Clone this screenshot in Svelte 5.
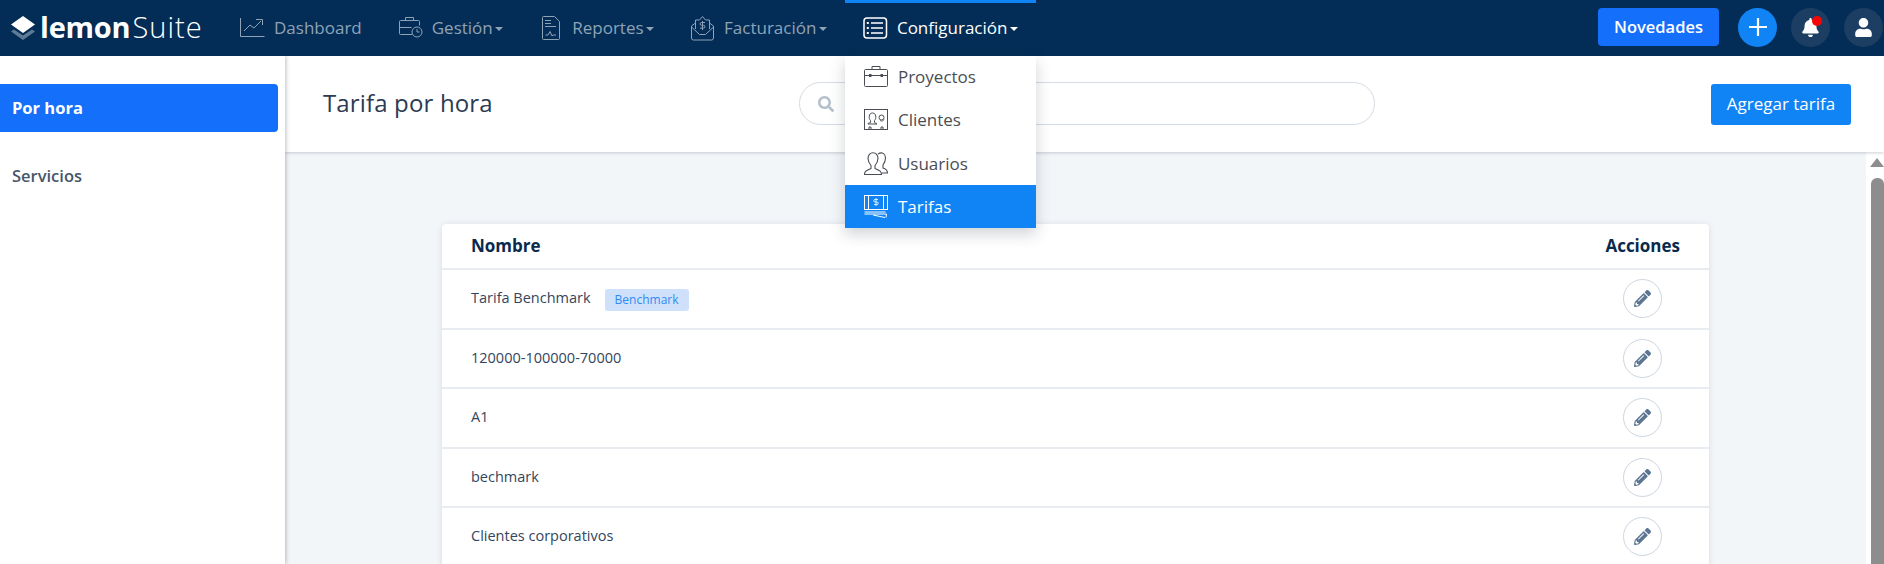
<script lang="ts">
	const navItems = [
		{ label: 'Dashboard', icon: 'chart', caret: false },
		{ label: 'Gestión', icon: 'case', caret: true },
		{ label: 'Reportes', icon: 'report', caret: true },
		{ label: 'Facturación', icon: 'mail', caret: true }
	];

	const rows = [
		{ name: 'Tarifa Benchmark', badge: 'Benchmark' },
		{ name: '120000-100000-70000' },
		{ name: 'A1' },
		{ name: 'bechmark' },
		{ name: 'Clientes corporativos' }
	];
</script>

{#snippet lineIcon(name: string)}
	{#if name === 'report'}
		<svg class="line-icon narrow" viewBox="0 0 22 26" fill="none" stroke="currentColor">
			<path d="M3.500 1.500h11l5 5v17a1 1 0 0 1-1 1h-15a1 1 0 0 1-1-1v-21a1 1 0 0 1 1-1z" />
			<path d="M5 5.500h6M5 8.500h6M5 11.500h11" />
			<path d="M5.500 20h2.500l2-3.500 2 4.500 1-1h3" />
		</svg>
	{:else}
		<svg class="line-icon" viewBox="0 0 25 26" fill="none" stroke="currentColor">
			{#if name === 'chart'}
				<path d="M0.500 3v18.500h24" />
				<path d="M4 16l6-6 4 3 7-7" />
				<path d="M16 4.500h6.500V10" />
			{:else if name === 'case'}
				<path d="M14 19.500H2.500a1 1 0 0 1-1-1v-12a1 1 0 0 1 1-1h18a1 1 0 0 1 1 1v4" />
				<path d="M7.500 5.500v-3h8v3M1.500 12.500h12" />
				<circle cx="19" cy="17" r="5" />
				<path d="M19 14v3h2.500" />
			{:else if name === 'mail'}
				<path d="M1.500 11v12a2 2 0 0 0 2 2h18a2 2 0 0 0 2-2V11" />
				<path d="M1.500 11l4-3M23.500 11l-4-3" />
				<path d="M5.500 14V5h4l3-3.500 3 3.500h4v9" />
				<path d="M1.500 12l8 7.500h6l8-7.500" />
				<path d="M15 7.500h-3.500a1.300 1.300 0 0 0 0 2.800h2a1.300 1.300 0 0 1 0 2.800H10M12.500 6v9" />
			{/if}
		</svg>
	{/if}
{/snippet}

<div class="page">
	<nav class="topbar">
		<div class="logo">
			<svg class="logo-mark" viewBox="0 0 24 24">
				<path d="M0 15.500l3-2 9 6 9-6 3 2-12 8.500z" fill="#5f7a96" />
				<path d="M12 0l12 8.500-12 8.500L0 8.500z" fill="#fff" />
			</svg>
			<span class="logo-bold">lemon</span><span class="logo-light">Suite</span>
		</div>

		{#each navItems as item}
			<div class="nav-item">
				{@render lineIcon(item.icon)}
				<span>{item.label}</span>
				{#if item.caret}<i class="caret"></i>{/if}
			</div>
		{/each}

		<div class="nav-item active">
			<svg class="line-icon" viewBox="0 0 25 26" fill="none" stroke="currentColor" stroke-width="1.500">
				<rect x="1" y="3" width="22.500" height="20" rx="3" />
				<path d="M8 8h12M8 13h12M8 18h12" />
				<path d="M3.800 8h2M3.800 13h2M3.800 18h2" stroke-width="2.200" />
			</svg>
			<span>Configuración</span>
			<i class="caret"></i>

			<div class="dropdown">
				<div class="drop-item lift">
					<svg class="drop-icon" viewBox="0 0 24 23" fill="none" stroke="currentColor">
						<rect x="0.500" y="4.500" width="23" height="17" rx="1" />
						<path d="M8 4.500v-3h8v3M0.500 10.500h23" />
						<path d="M5 9h2.500v3H5zM16.500 9H19v3h-2.500z" fill="currentColor" stroke="none" />
					</svg>
					<span>Proyectos</span>
				</div>
				<div class="drop-item lift">
					<svg class="drop-icon" viewBox="0 0 24 23" fill="none" stroke="currentColor">
						<rect x="0.500" y="1.500" width="23" height="20" />
						<path d="M6.500 12.500c-2-2-2-7.500 2-7.500s4 5.500 2 7.500v2l2.500 1.500H4v-0.500l2.500-1z" />
						<circle cx="17.500" cy="9.500" r="2.500" />
						<path d="M16 12.500c1.500 1 3.500 0.500 4-1" stroke-width="0.800" />
						<path d="M5 21.500v-2.500h2v2.500M17 21.500v-2.500h2v2.500" />
					</svg>
					<span>Clientes</span>
				</div>
				<div class="drop-item">
					<svg class="drop-icon" viewBox="0 0 24 23" fill="none" stroke="currentColor" stroke-width="1.100">
						<path d="M0.500 22.500c0-3 1.500-4 6.500-6v-3C5 11 4 9 4 6.500 4 3 6 0.800 9 0.800s5 2.200 5 5.700c0 2.500-1 4.500-3 7v3c5 2 6.500 3 6.500 6z" />
						<path d="M14 2c4-2.500 7.500-0.500 7.500 4 0 3-1 5-2.500 7v3c3 1 4.500 2.500 4.500 5h-6" />
					</svg>
					<span>Usuarios</span>
				</div>
				<div class="drop-item selected">
					<svg class="drop-icon" viewBox="0 0 24 23" fill="none" stroke="currentColor">
						<rect x="0.500" y="0.500" width="23" height="14" />
						<path d="M4.500 0.500v14M19.500 0.500v14" />
						<path d="M14 4.500h-3a1 1 0 0 0 0 2.500h2a1 1 0 0 1 0 2.500h-3M12 3v8" stroke-width="0.800" />
						<path d="M0.500 17h21M0.500 19h22l-0.500 3.500M9 20l12 2.500" />
					</svg>
					<span>Tarifas</span>
				</div>
			</div>
		</div>

		<div class="nav-right">
			<button class="btn-news">Novedades</button>
			<div class="round plus">
				<svg viewBox="0 0 20 20" width="20" height="20"><path d="M10 1v18M1 10h18" stroke="#fff" stroke-width="2.200" /></svg>
			</div>
			<div class="round dark bell">
				<svg viewBox="0 0 448 512" width="17" height="19">
					<path fill="#fff" d="M224 512c35.320 0 63.970-28.650 63.970-64H160.030c0 35.350 28.650 64 63.970 64zm215.390-149.710c-19.320-20.760-55.470-51.990-55.470-154.290 0-77.700-54.480-139.900-127.940-155.160V32c0-17.670-14.320-32-31.980-32s-31.980 14.330-31.980 32v20.840C118.560 68.100 64.080 130.300 64.080 208c0 102.300-36.150 133.530-55.470 154.290-6 6.450-8.660 14.160-8.610 21.710.11 16.400 12.980 32 32.100 32h383.800c19.120 0 32-15.600 32.100-32 .05-7.550-2.610-15.270-8.610-21.710z" />
				</svg>
				<span class="dot"></span>
			</div>
			<div class="round dark">
				<svg viewBox="0 0 448 512" width="17" height="19">
					<path fill="#fff" d="M224 256c70.700 0 128-57.300 128-128S294.700 0 224 0 96 57.300 96 128s57.300 128 128 128zm89.600 32h-16.700c-22.200 10.200-46.900 16-72.900 16s-50.600-5.800-72.900-16h-16.700C60.200 288 0 348.200 0 422.400V464c0 26.500 21.500 48 48 48h352c26.500 0 48-21.500 48-48v-41.600c0-74.200-60.200-134.400-134.400-134.400z" />
				</svg>
			</div>
		</div>
	</nav>

	<div class="body">
		<aside class="sidebar">
			<div class="side-item current">Por hora</div>
			<div class="side-item">Servicios</div>
		</aside>

		<main class="main">
			<header class="main-head">
				<h1>Tarifa por hora</h1>
				<div class="search">
					<svg viewBox="0 0 512 512" width="16" height="16">
						<path fill="#b4c0cc" d="M505 442.700L405.300 343c-4.500-4.500-10.600-7-17-7H372c27.600-35.300 44-79.700 44-128C416 93.100 322.900 0 208 0S0 93.100 0 208s93.100 208 208 208c48.300 0 92.700-16.400 128-44v16.300c0 6.400 2.500 12.500 7 17l99.700 99.700c9.400 9.400 24.600 9.400 33.900 0l28.300-28.300c9.400-9.400 9.400-24.600.1-34zM208 336c-70.700 0-128-57.200-128-128 0-70.700 57.200-128 128-128 70.700 0 128 57.200 128 128 0 70.700-57.200 128-128 128z" />
					</svg>
				</div>
				<button class="btn-add">Agregar tarifa</button>
			</header>

			<div class="scroller">
				<div class="content">
					<section class="card">
						<div class="row head">
							<span>Nombre</span>
							<span>Acciones</span>
						</div>
						{#each rows as row}
							<div class="row">
								<span class="name">{row.name}</span>
								{#if row.badge}<span class="badge">{row.badge}</span>{/if}
								<button class="edit" aria-label="Editar">
									<svg viewBox="0 0 512 512" width="17" height="17">
										<path fill="#5b7592" d="M497.900 142.100l-46.100 46.100c-4.700 4.700-12.300 4.700-17 0l-111-111c-4.700-4.700-4.700-12.300 0-17l46.100-46.100c18.700-18.700 49.100-18.700 67.900 0l60.100 60.100c18.800 18.700 18.800 49.100 0 67.900zM284.200 99.800L21.600 362.400.4 483.900c-2.900 16.400 11.400 30.600 27.800 27.800l121.500-21.300 262.600-262.600c4.700-4.700 4.700-12.300 0-17l-111-111c-4.800-4.700-12.400-4.700-17.100 0zM124.100 339.900c-5.500-5.500-5.500-14.300 0-19.800l154-154c5.500-5.500 14.300-5.500 19.800 0s5.500 14.300 0 19.800l-154 154c-5.500 5.500-14.300 5.500-19.800 0zM88 424h48v36.300l-64.500 11.300-31.100-31.100L51.700 376H88v48z" />
									</svg>
								</button>
							</div>
						{/each}
					</section>
				</div>
				<div class="scrollbar">
					<i class="arrow"></i>
					<i class="thumb"></i>
				</div>
			</div>
		</main>
	</div>
</div>

<style>
	:global(body) {
		margin: 0;
		font-family: 'Open Sans', 'Liberation Sans', sans-serif;
	}

	.page {
		height: 100vh;
		display: flex;
		flex-direction: column;
		overflow: hidden;
	}

	/* top bar */
	.topbar {
		height: 56px;
		flex: none;
		display: flex;
		align-items: stretch;
		background: #032d56;
		color: #8fa3b7;
		position: relative;
		z-index: 5;
	}
	.logo {
		width: 222px;
		box-sizing: border-box;
		padding: 0 0 3px 11px;
		display: flex;
		align-items: center;
		color: #fff;
		font-size: 29px;
	}
	.logo-mark {
		width: 24px;
		height: 24px;
		margin: 3px 5px 0 0;
		flex: none;
	}
	.logo-bold {
		font-weight: 700;
		margin-right: 2px;
		letter-spacing: -0.2px;
	}
	.logo-light {
		font-weight: 300;
		letter-spacing: 1px;
	}
	.nav-item {
		display: flex;
		align-items: center;
		padding: 0 18px;
		font-size: 17px;
		position: relative;
	}
	.nav-item > span {
		margin-bottom: 2px;
	}
	.nav-item.active {
		color: #fff;
		box-shadow: inset 0 3px 0 #1184f5;
	}
	.line-icon {
		width: 25px;
		height: 26px;
		margin-right: 9px;
		flex: none;
	}
	.line-icon.narrow {
		width: 22px;
		margin: 0 10px 0 1px;
	}
	.caret {
		width: 0;
		height: 0;
		margin-left: 2.500px;
		margin-top: 1px;
		border-left: 4.500px solid transparent;
		border-right: 4.500px solid transparent;
		border-top: 4.500px solid currentColor;
	}
	.nav-right {
		margin-left: auto;
		display: flex;
		align-items: center;
		gap: 14px;
		padding: 0 1px 2px 0;
	}
	.btn-news {
		width: 121px;
		height: 38px;
		margin-right: 5px;
		padding: 0 0 2px;
		border: 0;
		border-radius: 4px;
		background: #146ffb;
		color: #fff;
		font: 600 16.500px 'Open Sans', sans-serif;
	}
	.round {
		width: 39px;
		height: 39px;
		border-radius: 50%;
		display: grid;
		place-items: center;
		position: relative;
	}
	.round.plus {
		background: #1184f5;
	}
	.round.dark {
		background: #1b3e62;
	}
	.dot {
		position: absolute;
		top: 8px;
		right: 8px;
		width: 10px;
		height: 10px;
		border-radius: 50%;
		background: #f80606;
	}

	/* dropdown */
	.dropdown {
		position: absolute;
		top: 56px;
		left: 0;
		right: 0;
		background: #fff;
		box-shadow: 0 6px 14px rgba(40, 50, 70, 0.22);
		color: #4a4e54;
	}
	.drop-item {
		height: 43px;
		box-sizing: border-box;
		display: flex;
		align-items: center;
		padding-left: 19px;
		font-size: 17px;
	}
	.drop-item.lift {
		padding-bottom: 2px;
	}
	.drop-item.selected {
		background: #1184f5;
		color: #fff;
	}
	.drop-icon {
		width: 24px;
		height: 23px;
		margin-right: 10px;
		flex: none;
	}

	/* body */
	.body {
		flex: 1;
		min-height: 0;
		display: flex;
	}
	.sidebar {
		width: 285px;
		flex: none;
		box-sizing: border-box;
		padding-top: 28px;
		padding-right: 7px;
		background: #fff;
		box-shadow: 1px 0 4px rgba(60, 70, 90, 0.35);
		position: relative;
		z-index: 2;
	}
	.side-item {
		height: 48px;
		box-sizing: border-box;
		padding: 0 0 2px 12px;
		display: flex;
		align-items: center;
		margin-bottom: 20px;
		font-size: 16.500px;
		font-weight: 600;
		color: #46566b;
		border-radius: 0 4px 4px 0;
	}
	.side-item.current {
		background: #146ffb;
		color: #fff;
		font-weight: 700;
	}
	.main {
		flex: 1;
		min-width: 0;
		display: flex;
		flex-direction: column;
		background: #f3f6f9;
	}
	.main-head {
		height: 96px;
		flex: none;
		box-sizing: border-box;
		display: flex;
		align-items: center;
		padding: 0 33px 0 38px;
		background: #fff;
		box-shadow: 0 1px 3px rgba(60, 70, 90, 0.25);
		position: relative;
		z-index: 1;
	}
	h1 {
		width: 476px;
		margin: 0 0 3px;
		font-size: 24px;
		font-weight: 400;
		letter-spacing: 0.15px;
		color: #2a3b52;
	}
	.search {
		width: 576px;
		height: 43px;
		margin-bottom: 1px;
		box-sizing: border-box;
		border: 1px solid #d5dce4;
		border-radius: 22px;
		display: flex;
		align-items: center;
		padding-left: 18px;
	}
	.btn-add {
		margin-left: auto;
		width: 140px;
		height: 41px;
		padding: 0 0 2px;
		border: 0;
		border-radius: 3px;
		background: #1184f5;
		color: #fff;
		font: 400 17px 'Open Sans', sans-serif;
	}

	.scroller {
		flex: 1;
		min-height: 0;
		display: flex;
	}
	.content {
		flex: 1;
		min-width: 0;
		padding: 72px 157px 0;
		overflow: hidden;
	}
	.card {
		background: #fff;
		border-radius: 4px 4px 0 0;
		box-shadow: 0 1px 6px rgba(60, 70, 90, 0.15);
	}
	.row {
		height: 59.500px;
		box-sizing: border-box;
		padding: 0 47px 0 29px;
		display: flex;
		align-items: center;
		border-bottom: 2px solid #e8ebef;
		font-size: 14.500px;
		color: #33465d;
	}
	.row > span:not(.badge) {
		margin-bottom: 2px;
	}
	.row.head {
		height: 46px;
		justify-content: space-between;
		font-size: 17px;
		font-weight: 700;
		color: #0a2a4d;
		padding-right: 29px;
	}
	.badge {
		margin: 2px 0 0 14px;
		padding: 0 10px;
		height: 22px;
		display: flex;
		align-items: center;
		border-radius: 3px;
		background: #cfe1fa;
		color: #2f8bf2;
		font-size: 12px;
	}
	.edit {
		margin-left: auto;
		width: 39px;
		height: 39px;
		padding: 0;
		border: 1px solid #cdd6e0;
		border-radius: 50%;
		background: #fff;
		display: grid;
		place-items: center;
	}

	.scrollbar {
		width: 18px;
		flex: none;
		background: #fff;
		position: relative;
	}
	.arrow {
		display: block;
		margin: 6px 0 0 4px;
		width: 0;
		height: 0;
		border-left: 7px solid transparent;
		border-right: 7px solid transparent;
		border-bottom: 9px solid #8d8d8d;
	}
	.thumb {
		display: block;
		margin: 11px 0 0 5px;
		height: 400px;
		border-radius: 6px 6px 0 0;
		background: #8d8d8d;
	}
</style>
